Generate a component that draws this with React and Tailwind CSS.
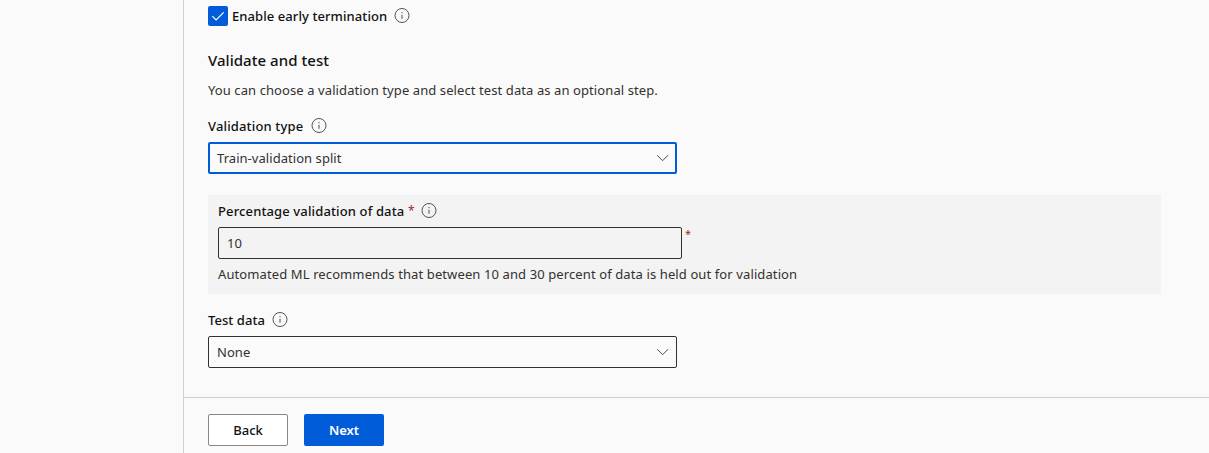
function InfoIcon() {
  return (
    <svg className="h-4 w-4 shrink-0" viewBox="0 0 16 16" fill="none">
      <circle cx="8" cy="7.5" r="7" stroke="#4a4a4a" strokeWidth="0.95" />
      <path d="M8 6.8v4" stroke="#4a4a4a" strokeWidth="1" />
      <path d="M8 4v1.2" stroke="#4a4a4a" strokeWidth="1" />
    </svg>
  );
}

function Chevron() {
  return (
    <svg className="h-3 w-3 shrink-0" viewBox="0 0 12 12" fill="none">
      <path d="M0.1 3.2L5.6 8.7L11.1 3.2" stroke="#4a4a4a" strokeWidth="1" />
    </svg>
  );
}

function Select({ value, active }) {
  return (
    <div
      className={
        active
          ? "flex h-8 w-[469px] items-center justify-between rounded-xs border-2 border-[#015cda] pr-[6px] pl-[7px]"
          : "flex h-8 w-[469px] items-center justify-between rounded-xs border border-[#323130] pr-[7px] pl-2"
      }
    >
      <span className="tracking-[0.05px] text-[#323130]">{value}</span>
      <Chevron />
    </div>
  );
}

export default function App() {
  return (
    <div className="flex h-[453px] w-[1209px] overflow-hidden bg-[#fafafa] font-['Noto_Sans','Open_Sans',sans-serif] text-[13px] leading-5 whitespace-nowrap text-[#111111]">
      <aside className="w-[183px] shrink-0" />
      <main className="flex grow flex-col border-l border-[#d0d0d0]">
        <section className="flex h-[397px] flex-col pt-1.5 pr-12 pl-6">
          <div className="flex h-5 items-center">
            <span className="flex h-5 w-5 items-center justify-center rounded-xs bg-[#015cda]">
              <svg className="h-3.5 w-3.5" viewBox="0 0 14 14" fill="none">
                <path d="M1.3 7.2L5.1 11L12.7 3.4" stroke="white" strokeWidth="1.2" />
              </svg>
            </span>
            <span className="ml-1 w-[162px] font-medium tracking-[0.08px]">Enable early termination</span>
            <InfoIcon />
          </div>
          <h2 className="mt-6 text-[15px] leading-5 font-medium tracking-[0.04px]">Validate and test</h2>
          <p className="mt-2.5 tracking-[0.09px] text-[#323130]">
            You can choose a validation type and select test data as an optional step.
          </p>
          <div className="mt-4 mb-1.5 flex h-5 items-center">
            <span className="w-[103px] font-medium tracking-[0.15px]">Validation type</span>
            <InfoIcon />
          </div>
          <Select value="Train-validation split" active />
          <div className="mt-[21px] h-[99px] bg-[#f3f3f3] px-2.5 pt-1.5">
            <div className="flex h-5 items-center">
              <span className="w-[190px] font-medium tracking-[0.13px]">Percentage validation of data</span>
              <span className="w-[13px] text-xs text-[#a4262c]">*</span>
              <InfoIcon />
            </div>
            <div className="mt-1.5 flex">
              <div className="flex h-8 w-[464px] items-center rounded-xs border border-[#323130] px-2 text-[#323130]">
                10
              </div>
              <span className="-mt-px ml-[3px] text-[11px] leading-4 text-[#a4262c]">*</span>
            </div>
            <p className="mt-[5px] tracking-[0.108px] text-[#323130]">
              Automated ML recommends that between 10 and 30 percent of data is held out for validation
            </p>
          </div>
          <div className="mt-4 mb-1.5 flex h-5 items-center">
            <span className="w-[64px] font-medium tracking-[0.05px]">Test data</span>
            <InfoIcon />
          </div>
          <Select value="None" />
        </section>
        <footer className="flex grow gap-4 border-t border-[#d0d0d0] pt-4 pl-6">
          <button className="h-8 w-20 rounded-xs border border-[#8a8886] bg-white font-medium">Back</button>
          <button className="h-8 w-20 rounded-xs bg-[#015cda] font-semibold text-white">Next</button>
        </footer>
      </main>
    </div>
  );
}
